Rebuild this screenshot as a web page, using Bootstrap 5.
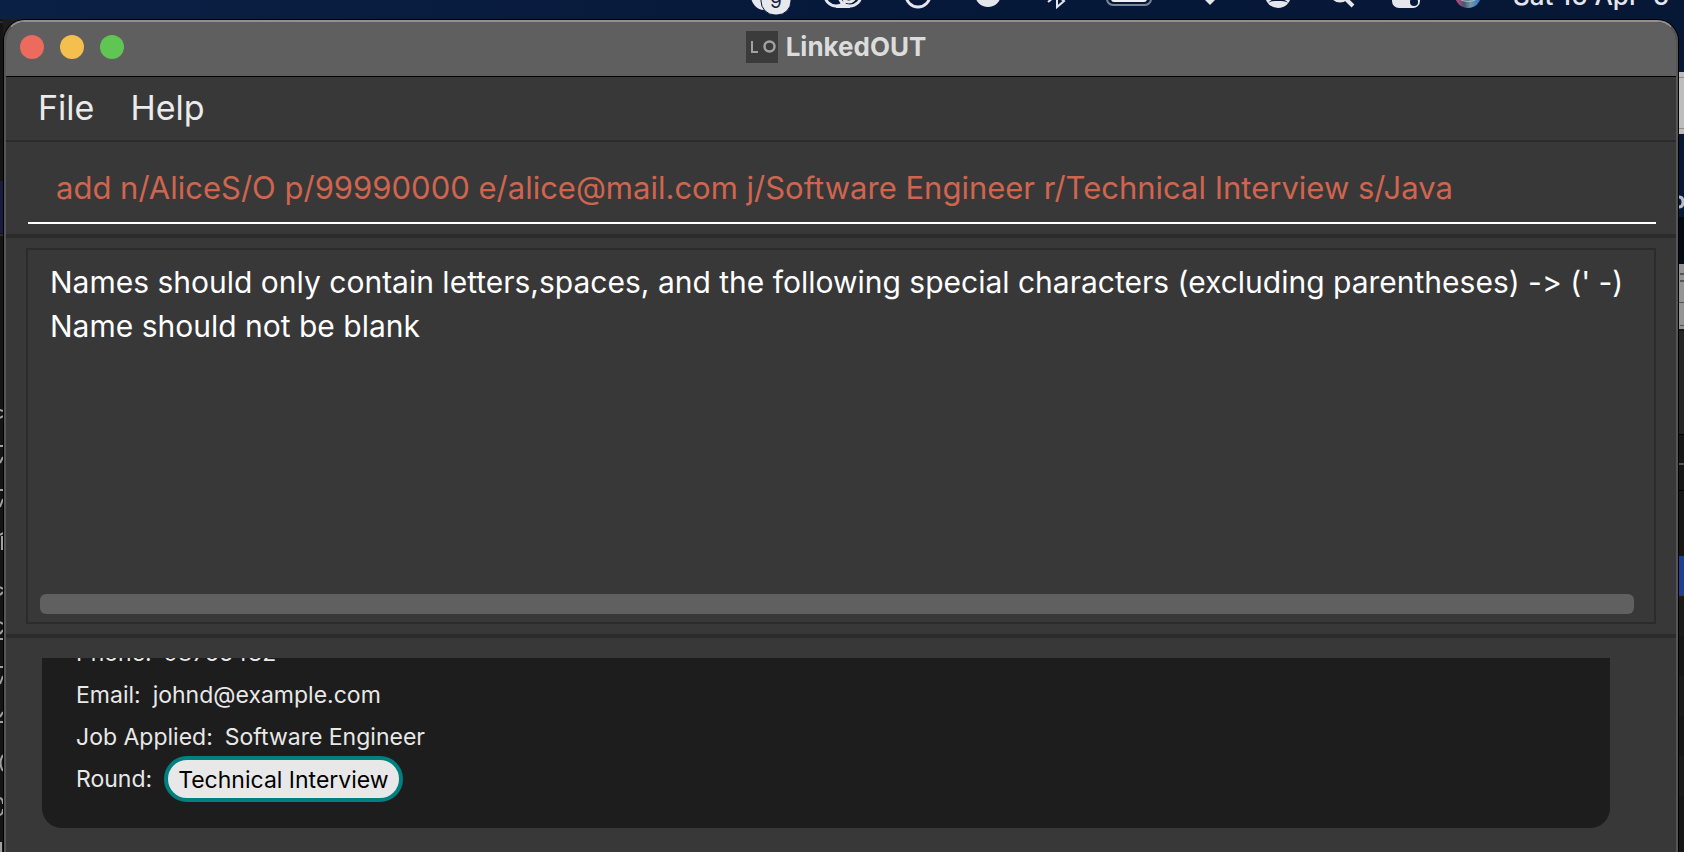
<!DOCTYPE html>
<html lang="en" data-bs-theme="dark">
<head>
<meta charset="utf-8">
<meta name="viewport" content="width=device-width, initial-scale=1">
<title>LinkedOUT</title>
<link href="https://cdn.jsdelivr.net/npm/bootstrap@5.3.0/dist/css/bootstrap.min.css" rel="stylesheet">
<style>
  body { font-family: Inter, "Liberation Sans", sans-serif; background: #151515; color: #e8e8e8; }
  .menu-strip { height: 19px; background: linear-gradient(90deg, #0b2045, #06193a 50%, #071736); }
  .menu-strip svg { flex: none; height: 19px; }
  .menu-clock { width: 184px; padding-left: 13px; font-size: 26px; line-height: 28px; font-weight: 500; margin-top: -18px; color: #e4e6ec; white-space: pre; }
  .desk { background: linear-gradient(90deg, #1c1c1c 50%, #071736 50%); }
  .edge-left { width: 3px; flex: none; background: #141414; }
  .edge-right { width: 5px; flex: none; background: #171614; }
  .app-window { min-width: 0; background: #383838; border: 1px solid #000; border-bottom: 0; border-radius: 22px 22px 0 0; }
  .app-frame { min-height: 100%; border: 2px solid #555; border-top-color: #918f90; border-bottom: 0; border-radius: 21px 21px 0 0; }
  .title-bar { height: 55px; background: #5f5f5f; border-bottom: 1px solid #000; border-radius: 19px 19px 0 0; padding: 0 24px 4px 14px; }
  .dot { width: 24px; height: 24px; padding: 0; border: 0; border-radius: 50%; }
  .dot-close { background: #ed6a5e; } .dot-min { background: #f5bf4f; } .dot-max { background: #61c554; }
  .title-side { flex: 1 1 0; }
  .title-name { font-size: 26px; line-height: 32px; font-weight: 700; color: #dcdcdc; }
  .menu-bar { height: 65px; padding: 0 32px 2px; gap: 36px; border-bottom: 2px solid #2b2b2b; }
  .menu-item { padding: 0; border: 0; background: none; color: #ebebeb; font-size: 34px; line-height: 40px; }
  .command-pane { padding: 12px 20px 10px 22px; border-bottom: 4px solid #2b2b2b; }
  .command-input { height: 70px; padding: 0 28px 2px; border: 0; border-bottom: 2px solid #fff; border-radius: 0; background: none; color: #d0654f; font-size: 31px; }
  .command-input:focus { background: none; color: #d0654f; box-shadow: none; border-color: #fff; }
  .result-pane { padding: 10px 20px; border-bottom: 4px solid #2b2b2b; }
  .result-box { border: 2px solid #2b2b2b; padding: 10px 12px 8px; }
  .result-text { height: 334px; padding: 0 0 0 10px; border: 0; resize: none; background: none; color: #fff; font-size: 30px; line-height: 44px; white-space: pre; overflow: hidden; outline: 0; font-feature-settings: "calt" 0; }
  .scroll-thumb { height: 20px; margin-right: 8px; border-radius: 6px; background: #606060; }
  .list-pane { padding: 20px 66px 24px 36px; }
  .list-view { height: 170px; overflow: hidden; }
  .person { background: #1d1d1d; border-radius: 20px; padding: 24px 34px 28px; font-size: 23px; line-height: 42px; }
  .person dl > div { gap: 12px; height: 42px; }
  .person dt { font-weight: 400; }
  .round-tag { height: 46px; padding: 0 10px; border: 4px solid #008080; border-radius: 23px; background: #e8e8e8; color: #000; line-height: 40px; }
  .round-row { align-items: center; }
</style>
</head>
<body class="vh-100 overflow-hidden d-flex flex-column">
  <header class="menu-strip d-flex justify-content-end overflow-hidden flex-shrink-0">
    <svg width="67" viewBox="740 0 67 19" aria-hidden="true"><circle cx="765" cy="-4" r="14" fill="#e6e8ed"/><rect x="761" y="-14" width="30" height="29" rx="14" fill="#e6e8ed" stroke="#06193a" stroke-width="1"/><text x="770" y="8" font-family="Inter" font-size="19" fill="#14223f">9</text></svg>
    <svg width="77" viewBox="807 0 77 19" aria-hidden="true" fill="none" stroke="#e4e6ec" stroke-width="3"><circle cx="836" cy="-5" r="11"/><circle cx="850" cy="-5" r="11"/><path d="M836 6.500h14"/><circle cx="849" cy="-4" r="6"/></svg>
    <svg width="69" viewBox="884 0 69 19" aria-hidden="true"><circle cx="918" cy="-5" r="12" fill="none" stroke="#e4e6ec" stroke-width="3"/></svg>
    <svg width="71" viewBox="953 0 71 19" aria-hidden="true"><circle cx="988" cy="-6" r="13" fill="#e4e6ec"/></svg>
    <svg width="62" viewBox="1024 0 62 19" aria-hidden="true"><path d="M1048 2l10-8-10-8M1057-10V7l7-6-12-9" fill="none" stroke="#e4e6ec" stroke-width="2"/></svg>
    <svg width="89" viewBox="1086 0 89 19" aria-hidden="true"><rect x="1107" y="-15" width="44" height="20" rx="6" fill="none" stroke="#7b8598" stroke-width="2"/><rect x="1111" y="-12" width="36" height="14" rx="3" fill="#f0f1f4"/></svg>
    <svg width="65" viewBox="1175 0 65 19" aria-hidden="true"><path d="M1203-2h14l-7 7z" fill="#e4e6ec"/></svg>
    <svg width="70" viewBox="1240 0 70 19" aria-hidden="true"><circle cx="1278" cy="-5" r="13" fill="#e4e6ec"/><path d="M1268 3q3-3 6-4l-1-2h10l-1 2q4 1 6 4-2-2-7-2h-6q-5 0-7 2z" fill="#06193a"/></svg>
    <svg width="60" viewBox="1310 0 60 19" aria-hidden="true"><circle cx="1340" cy="-8" r="9" fill="none" stroke="#e4e6ec" stroke-width="3"/><path d="M1346-1l7 7" stroke="#e4e6ec" stroke-width="4"/></svg>
    <svg width="68" viewBox="1370 0 68 19" aria-hidden="true"><rect x="1392" y="-7" width="28" height="15" rx="7" fill="#e4e6ec"/><circle cx="1414" cy="2" r="4" fill="#06193a"/></svg>
    <svg width="62" viewBox="1438 0 62 19" aria-hidden="true"><defs><linearGradient id="orb"><stop stop-color="#d94a75"/><stop offset=".35" stop-color="#4b5278"/><stop offset=".6" stop-color="#6d9aa8"/><stop offset="1" stop-color="#2c6fd0"/></linearGradient></defs><circle cx="1468" cy="-5" r="13" fill="url(#orb)"/><path d="M1459-1q10 5 18 0" stroke="#a9c3ca" fill="none"/></svg>
    <div class="menu-clock flex-shrink-0">Sat 16 Apr  6</div>
  </header>

  <div class="desk d-flex flex-grow-1">
    <svg class="edge-left" width="3" viewBox="0 19 3 833" preserveAspectRatio="xMinYMin slice" aria-hidden="true">
      <rect y="181" width="3" height="52" fill="#181c40"/><path d="M0 22h3M0 235h3" stroke="#444"/>
      <g fill="none" stroke="#a0a0a0" stroke-width="2"><path d="M0 410l3 1M0 418l3-2M0 446h3M0 463l3-6M0 490h3M0 507l3-8M0 535l3-2M2 536v14M0 587l3 2M0 595l3-3M0 622l3 2M0 639h3M0 634l3-4M0 667h3M0 684l3-8M0 722h3M0 717l3-5M3 755q-5 8 0 16M0 798q3 1 3 6M0 815q3-1 3-6M1 842v10"/></g>
    </svg>

    <main class="app-window flex-grow-1">
      <div class="app-frame">
        <div class="title-bar d-flex align-items-center">
          <div class="title-side d-flex gap-3">
            <button type="button" class="dot dot-close" aria-label="Close"></button>
            <button type="button" class="dot dot-min" aria-label="Minimize"></button>
            <button type="button" class="dot dot-max" aria-label="Zoom"></button>
          </div>
          <div class="d-flex align-items-center gap-2">
            <svg width="32" height="32" viewBox="0 0 32 32" aria-hidden="true"><path fill="#3b3b3b" d="M0 0h32v32H0z"/><path d="M6 10v11h6" fill="none" stroke="#a2a2a2" stroke-width="2"/><circle cx="23.500" cy="15.500" r="5" fill="none" stroke="#a2a2a2" stroke-width="2.500"/></svg>
            <span class="title-name">LinkedOUT</span>
          </div>
          <div class="title-side"></div>
        </div>

        <nav class="menu-bar d-flex align-items-center" aria-label="Application">
          <button type="button" class="menu-item">File</button>
          <button type="button" class="menu-item">Help</button>
        </nav>

        <form class="command-pane">
          <input type="text" class="form-control command-input" aria-label="Command" spellcheck="false" value="add n/AliceS/O p/99990000 e/alice@mail.com j/Software Engineer r/Technical Interview s/Java">
        </form>

        <section class="result-pane">
          <div class="result-box">
            <textarea class="result-text d-block w-100" readonly aria-label="Result" spellcheck="false">Names should only contain letters,spaces, and the following special characters (excluding parentheses) -> (' -)
Name should not be blank</textarea>
            <div class="scroll-thumb"></div>
          </div>
        </section>

        <section class="list-pane">
          <div class="list-view d-flex flex-column justify-content-end">
            <article class="person">
              <dl class="mb-0">
                <div class="d-flex"><dt>Phone:</dt><dd class="mb-0">98765432</dd></div>
                <div class="d-flex"><dt>Email:</dt><dd class="mb-0">johnd@example.com</dd></div>
                <div class="d-flex"><dt>Job Applied:</dt><dd class="mb-0">Software Engineer</dd></div>
                <div class="d-flex round-row"><dt>Round:</dt><dd class="mb-0 round-tag">Technical Interview</dd></div>
              </dl>
            </article>
          </div>
        </section>
      </div>
    </main>

    <svg class="edge-right" width="5" viewBox="0 19 5 833" preserveAspectRatio="xMinYMin slice" aria-hidden="true">
      <path fill="#071736" d="M0 19h5v198H0z"/><path fill="#bdbdbd" d="M0 72h5v62H0z"/><path fill="#8c8c8c" d="M0 77h5v1H0zM0 128h5v1H0z"/>
      <path fill="#040a14" d="M0 217h5v47H0z"/><path d="M0 197q4 0 4 5t-4 5" fill="none" stroke="#b8bcc4" stroke-width="3"/>
      <path fill="#949494" d="M0 264h5v65H0z"/><path fill="#555" d="M1 273h4v2H1zM1 280h4v2H1zM0 302h5v1H0zM1 325h4v1H1z"/>
      <path fill="#242424" d="M0 331h5v103H0z"/><path fill="#000" d="M0 434h5v1H0zM0 490h5v1H0z"/><path fill="#555" d="M0 463h5v2H0z"/>
      <path fill="#1c3f91" d="M0 556h5v40H0z"/><path fill="#1b1a18" d="M0 596h5v40H0zM0 676h5v40H0zM0 756h5v40H0z"/>
    </svg>
  </div>
<script src="https://cdn.jsdelivr.net/npm/bootstrap@5.3.0/dist/js/bootstrap.bundle.min.js"></script>
</body>
</html>
